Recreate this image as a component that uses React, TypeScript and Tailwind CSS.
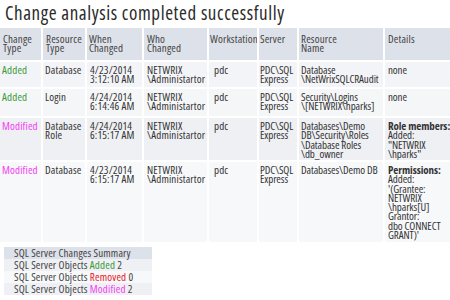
import type { ReactNode } from 'react'

type Kind = 'Added' | 'Modified'

interface Row {
  kind: Kind
  type: ReactNode
  when: [string, string]
  who: [string, string]
  server: [string, string]
  name: ReactNode
  details: ReactNode
  tone: string
}

const kindColor: Record<Kind, string> = {
  Added: 'text-[#3a9b3a]',
  Modified: 'text-[#f53df5]',
}

const rows: Row[] = [
  {
    kind: 'Added',
    type: 'Database',
    when: ['4/23/2014', '3:12:10 AM'],
    who: ['NETWRIX', '\\Administartor'],
    server: ['PDC\\SQL', 'Express'],
    name: (
      <>
        Database
        <br />
        \NetWrixSQLCRAudit
      </>
    ),
    details: 'none',
    tone: 'bg-[#f3f4f7] h-[25px]',
  },
  {
    kind: 'Added',
    type: 'Login',
    when: ['4/24/2014', '6:14:46 AM'],
    who: ['NETWRIX', '\\Administartor'],
    server: ['PDC\\SQL', 'Express'],
    name: (
      <>
        Security\Logins
        <br />
        \[NETWRIX\hparks]
      </>
    ),
    details: 'none',
    tone: 'bg-[#f5f6f8] h-[27px]',
  },
  {
    kind: 'Modified',
    type: (
      <>
        Database
        <br />
        Role
      </>
    ),
    when: ['4/24/2014', '6:15:17 AM'],
    who: ['NETWRIX', '\\Administartor'],
    server: ['PDC\\SQL', 'Express'],
    name: (
      <>
        Databases\Demo
        <br />
        DB\Security\Roles
        <br />
        \Database Roles
        <br />
        \db_owner
      </>
    ),
    details: (
      <>
        <b className="font-bold">Role members:</b>
        <br />
        Added:
        <br />
        "NETWRIX
        <br />
        \hparks"
      </>
    ),
    tone: 'bg-[#eef0f4] h-[42px]',
  },
  {
    kind: 'Modified',
    type: 'Database',
    when: ['4/23/2014', '6:15:17 AM'],
    who: ['NETWRIX', '\\Administartor'],
    server: ['PDC\\SQL', 'Express'],
    name: 'Databases\\Demo DB',
    details: (
      <>
        <b className="font-bold">Permissions:</b>
        <br />
        Added:
        <br />
        '(Grantee:
        <br />
        NETWRIX
        <br />
        \hparks[U]
        <br />
        Grantor:
        <br />
        dbo CONNECT
        <br />
        GRANT)'
      </>
    ),
    tone: 'bg-[#f7f8fa] h-[80px]',
  },
]

const cell = 'p-0 align-top text-left font-normal whitespace-nowrap overflow-hidden'
const head = `${cell} pt-[6px]`
const body = `${cell} pt-[3px]`

export default function App() {
  return (
    <div
      className="w-[450px] h-[300px] overflow-hidden bg-white text-[#333] text-[11px] leading-[9.3px] tracking-[0.15px]"
      style={{ fontFamily: '"Open Sans", "Noto Sans", sans-serif', fontStretch: '75%' }}
    >
      <h1 className="h-[26px] pl-[5px] pt-[1px] text-[19px] leading-[25px] tracking-[0.6px] text-[#2b2b2b]">
        Change analysis completed successfully
      </h1>

      <table className="table-fixed border-separate border-spacing-[2px] -ml-[2px] w-[455px]">
        <colgroup>
          <col className="w-[41px]" />
          <col className="w-[42px]" />
          <col className="w-[55px]" />
          <col className="w-[63px]" />
          <col className="w-[48px]" />
          <col className="w-[38px]" />
          <col className="w-[84px]" />
          <col className="w-[66px]" />
        </colgroup>
        <thead>
          <tr className="bg-[#dde1e9] h-[32px] text-[#444]">
            <th className={`${head} pl-[3px]`}>Change<br />Type</th>
            <th className={`${head} pl-[3px]`}>Resource<br />Type</th>
            <th className={`${head} pl-[2px]`}>When<br />Changed</th>
            <th className={`${head} pl-[3px]`}>Who<br />Changed</th>
            <th className={`${head} pl-[1px]`}>Workstation</th>
            <th className={`${head} pl-[1px]`}>Server</th>
            <th className={`${head} pl-[2px]`}>Resource<br />Name</th>
            <th className={`${head} pl-[3px]`}>Details</th>
          </tr>
        </thead>
        <tbody>
          {rows.map((r, i) => (
            <tr key={i} className={r.tone}>
              <td className={`${body} pl-[2px] ${kindColor[r.kind]}`}>{r.kind}</td>
              <td className={`${body} pl-[2px]`}>{r.type}</td>
              <td className={`${body} pl-[3px]`}>
                {r.when[0]}
                <br />
                {r.when[1]}
              </td>
              <td className={`${body} pl-[3px]`}>
                {r.who[0]}
                <br />
                {r.who[1]}
              </td>
              <td className={`${body} pl-[5px]`}>pdc</td>
              <td className={`${body} pl-[1px] tracking-[-0.1px]`}>
                {r.server[0]}
                <br />
                {r.server[1]}
              </td>
              <td className={`${body} pl-[2px] tracking-[-0.1px]`}>{r.name}</td>
              <td className={`${body} pl-[3px] tracking-[-0.1px]`}>{r.details}</td>
            </tr>
          ))}
        </tbody>
      </table>

      <div className="ml-[4px] mt-[3px] w-[148px] whitespace-nowrap leading-[12px] text-[#444]">
        <div className="bg-[#dde1e9] pl-[10px]">SQL Server Changes Summary</div>
        <div className="bg-[#eef0f4] pl-[10px]">
          SQL Server Objects <span className="text-[#3a9b3a]">Added</span> 2
        </div>
        <div className="bg-[#f7f8fa] pl-[10px]">
          SQL Server Objects <span className="text-[#e8141e]">Removed</span> 0
        </div>
        <div className="bg-[#eef0f4] pl-[10px]">
          SQL Server Objects <span className="text-[#f53df5]">Modified</span> 2
        </div>
      </div>
    </div>
  )
}
